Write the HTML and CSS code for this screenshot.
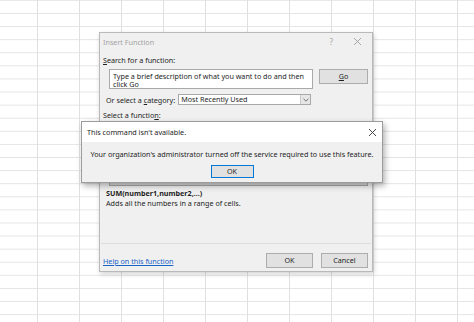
FILE: index.html
```html
<!DOCTYPE html>
<html lang="en">
<head>
    <meta charset="UTF-8">
    <meta name="viewport" content="width=device-width, initial-scale=1.0">
    <title>Insert Function</title>
    <link rel="stylesheet" href="styles.css">
</head>
<body>
    <div class="sheet">
        <div class="dialog insert-fn">
            <div class="titlebar">
                <span class="title">Insert Function</span>
                <span class="title-btns">
                    <span class="help">?</span>
                    <svg class="close" width="9" height="9" viewBox="0 0 9 9"><path d="M1 1L8 8M8 1L1 8" stroke="#9a9a9a" stroke-width="0.9"/></svg>
                </span>
            </div>
            <div class="fn-body">
                <div class="label"><u>S</u>earch for a function:</div>
                <div class="search-row">
                    <div class="textbox">Type a brief description of what you want to do and then click Go</div>
                    <button class="btn go"><u>G</u>o</button>
                </div>
                <div class="category-row">
                    <span>Or select a <u>c</u>ategory:</span>
                    <div class="select">
                        <span>Most Recently Used</span>
                        <span class="arrow"><svg width="6" height="4" viewBox="0 0 6 4"><path d="M0.5 0.8L3 3.2L5.5 0.8" fill="none" stroke="#555" stroke-width="0.8"/></svg></span>
                    </div>
                </div>
                <div class="label">Select a functio<u>n</u>:</div>
                <div class="listbox">
                    <div class="item selected">SUM</div>
                </div>
                <div class="signature">SUM(number1,number2,...)</div>
                <div class="desc">Adds all the numbers in a range of cells.</div>
                <div class="separator"></div>
                <div class="footer">
                    <a href="#" class="help-link">Help on this function</a>
                    <div class="footer-btns">
                        <button class="btn">OK</button>
                        <button class="btn">Cancel</button>
                    </div>
                </div>
            </div>
        </div>

        <div class="dialog alert">
            <div class="alert-title">
                <span>This command isn't available.</span>
                <svg width="9" height="9" viewBox="0 0 9 9"><path d="M1 1L8 8M8 1L1 8" stroke="#333" stroke-width="0.9"/></svg>
            </div>
            <div class="alert-body">
                <p class="message">Your organization's administrator turned off the service required to use this feature.</p>
                <button class="btn ok-default">OK</button>
            </div>
        </div>
    </div>
</body>
</html>
```

FILE: styles.css
```css
* {
    box-sizing: border-box;
}
body {
    margin: 0;
    font-family: "Noto Sans", "Open Sans", sans-serif;
    font-size: 7.2px;
    color: #1e1e1e;
}
.sheet {
    position: relative;
    width: 474px;
    height: 322px;
    background-color: #fff;
    background-image:
        linear-gradient(to right, #e0e0e0 1px, transparent 1px),
        linear-gradient(to bottom, #e4e4e4 1px, transparent 1px);
    background-size: 42px 100%, 100% 13.1px;
    background-position: 37px 0, 0 13px;
    overflow: hidden;
}
.dialog {
    position: absolute;
    background-color: #f0f0f0;
}
.btn {
    font-family: inherit;
    font-size: inherit;
    color: #1e1e1e;
    background-color: #e1e1e1;
    border: 1px solid #adadad;
    padding: 0;
    line-height: 1;
}

/* insert function dialog */
.insert-fn {
    left: 99px;
    top: 32px;
    width: 274px;
    height: 240px;
    border: 1px solid #b9b9b9;
    box-shadow: 1px 2px 5px rgba(0, 0, 0, 0.18);
}
.titlebar {
    height: 17px;
    display: flex;
    justify-content: space-between;
    align-items: center;
    padding: 0 10px 0 3px;
    color: #a3a3a3;
}
.title-btns {
    display: flex;
    align-items: center;
    gap: 20px;
}
.help {
    font-size: 8px;
}
.fn-body {
    padding: 5px 4px 0 3px;
}
.label {
    line-height: 11px;
}
.search-row {
    display: flex;
    align-items: flex-start;
    margin-top: 3px;
    padding-left: 6px;
    gap: 6px;
}
.textbox {
    width: 204px;
    height: 20px;
    background-color: #fff;
    border: 1px solid #a9a9a9;
    padding: 1.5px 3px;
    line-height: 8px;
}
.go {
    width: 49px;
    height: 15px;
}
.category-row {
    display: flex;
    align-items: center;
    gap: 3px;
    margin-top: 5px;
    padding-left: 3px;
    height: 11px;
}
.select {
    width: 133px;
    height: 11px;
    display: flex;
    justify-content: space-between;
    background-color: #fff;
    border: 1px solid #a9a9a9;
    padding-left: 2px;
    line-height: 9px;
}
.arrow {
    width: 10px;
    display: flex;
    align-items: center;
    justify-content: center;
    background-color: #e6e6e6;
    border-left: 1px solid #c8c8c8;
}
.category-row + .label {
    margin-top: 5px;
}
.listbox {
    margin-left: 6px;
    height: 65px;
    display: flex;
    flex-direction: column;
    justify-content: flex-end;
    background-color: #fff;
    border: 1px solid #a9a9a9;
    line-height: 9px;
}
.item {
    padding-left: 2px;
}
.item.selected {
    background-color: #d9d9d9;
    border-top: 1px solid #555;
}
.signature {
    margin-top: 3px;
    padding-left: 3px;
    font-weight: bold;
    line-height: 9.5px;
}
.desc {
    padding-left: 3px;
    line-height: 9.5px;
}
.separator {
    margin: 35px -3px 0 -2px;
    border-top: 1px solid #dcdcdc;
}
.footer {
    display: flex;
    justify-content: space-between;
    align-items: center;
    margin-top: 9px;
}
.help-link {
    color: #1a64c8;
    text-decoration: underline;
}
.footer-btns {
    display: flex;
    gap: 8px;
}
.footer-btns .btn {
    width: 47px;
    height: 15px;
}

/* alert */
.alert {
    left: 81px;
    top: 121px;
    width: 302px;
    height: 62px;
    border: 1px solid #9c9c9c;
    box-shadow: 2px 3px 6px rgba(0, 0, 0, 0.3);
}
.alert-title {
    height: 20px;
    display: flex;
    justify-content: space-between;
    align-items: center;
    padding: 0 5px 0 5px;
    background-color: #fff;
}
.alert-body {
    display: flex;
    flex-direction: column;
    align-items: center;
}
.message {
    margin: 8px 0 0;
    line-height: 9px;
}
.ok-default {
    margin-top: 6px;
    width: 43px;
    height: 13px;
    border: 1px solid #0078d7;
}
```
